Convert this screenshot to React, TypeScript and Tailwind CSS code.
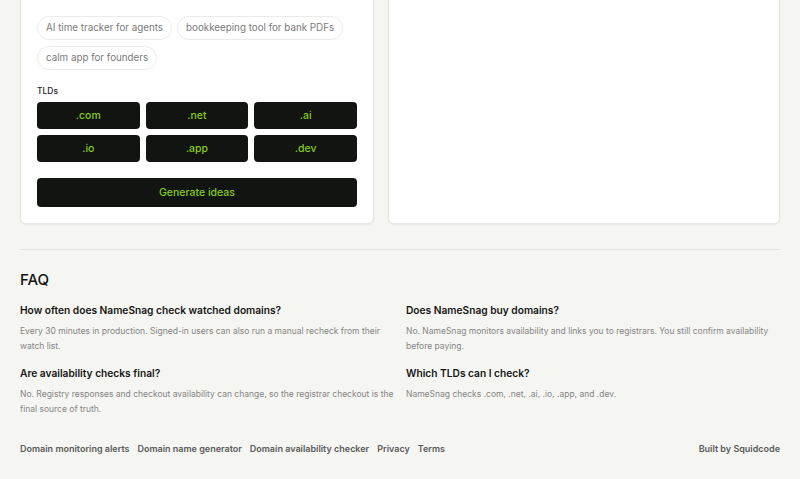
import React from "react";

const ideas = ["AI time tracker for agents", "bookkeeping tool for bank PDFs", "calm app for founders"];
const tlds = [".com", ".net", ".ai", ".io", ".app", ".dev"];

const faqs = [
  {
    q: "How often does NameSnag check watched domains?",
    a: "Every 30 minutes in production. Signed-in users can also run a manual recheck from their watch list.",
  },
  {
    q: "Does NameSnag buy domains?",
    a: "No. NameSnag monitors availability and links you to registrars. You still confirm availability before paying.",
  },
  {
    q: "Are availability checks final?",
    a: "No. Registry responses and checkout availability can change, so the registrar checkout is the final source of truth.",
  },
  {
    q: "Which TLDs can I check?",
    a: "NameSnag checks .com, .net, .ai, .io, .app, and .dev.",
  },
];

const links = ["Domain monitoring alerts", "Domain name generator", "Domain availability checker", "Privacy", "Terms"];

export default function App() {
  return (
    <div
      className="min-h-[479px] bg-[#f5f5f1] px-5 text-[#111] overflow-hidden"
      style={{ fontFamily: "Inter, 'Noto Sans', sans-serif" }}
    >
      <div className="grid grid-cols-[354px_392px] gap-[14px] -mt-[53px]">
        <div className="rounded-md border border-[#e7e7e2] bg-white p-4 shadow-[0_1px_2px_rgba(0,0,0,0.06)]">
          <div className="h-9 rounded-md border border-[#e4e4df] bg-white" />
          <div className="mt-4 flex flex-wrap gap-x-[5px] gap-y-[6px]">
            {ideas.map((t) => (
              <span
                key={t}
                className="h-[24px] flex items-center rounded-full border border-[#ebebe7] bg-white px-2 text-[9.8px] text-[#7a7a7a]"
              >
                {t}
              </span>
            ))}
          </div>
          <div className="mt-[15px] text-[8.5px] font-medium leading-3 text-[#222]">TLDs</div>
          <div className="mt-[5px] grid grid-cols-3 gap-[6px]">
            {tlds.map((t) => (
              <div
                key={t}
                className="h-[27px] flex items-center justify-center rounded-[4px] bg-[#121411] text-[10.5px] font-medium text-[#84cc16]"
              >
                {t}
              </div>
            ))}
          </div>
          <button className="mt-4 h-[29px] w-full rounded-[4px] bg-[#121411] text-[10.5px] font-medium text-[#84cc16]">
            Generate ideas
          </button>
        </div>
        <div className="rounded-md border border-[#e7e7e2] bg-white shadow-[0_1px_2px_rgba(0,0,0,0.06)]" />
      </div>

      <div className="mt-[25px] border-t border-[#e6e6e1]" />

      <h2 className="mt-[20px] text-[15px] font-medium leading-5 text-[#111]">FAQ</h2>

      <div className="mt-[12px] grid grid-cols-2 gap-x-3 gap-y-[11px]">
        {faqs.map((f) => (
          <div key={f.q}>
            <h3 className="text-[10.2px] font-semibold leading-4 text-[#151515]">{f.q}</h3>
            <p className="mt-[6px] text-[8.5px] leading-[15px] text-[#858585]">{f.a}</p>
          </div>
        ))}
      </div>

      <footer className="mt-[25px] flex items-center justify-between text-[9px] font-semibold text-[#5a5a5a]">
        <div className="flex gap-2">
          {links.map((l) => (
            <span key={l}>{l}</span>
          ))}
        </div>
        <span>Built by Squidcode</span>
      </footer>
    </div>
  );
}
